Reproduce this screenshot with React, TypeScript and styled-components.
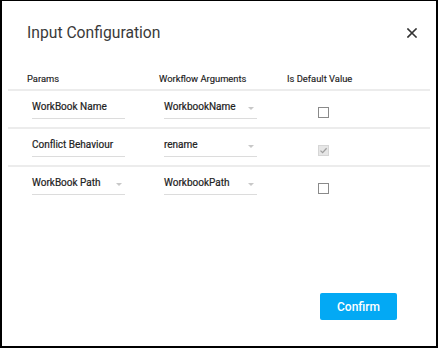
import styled, { createGlobalStyle } from "styled-components";

const GlobalStyle = createGlobalStyle`
  html, body {
    margin: 0;
    padding: 0;
    background: #ffffff;
  }
  body {
    font-family: Roboto, "Liberation Sans", sans-serif;
    color: #333333;
  }
`;

type Row = {
  param: string;
  paramSelect?: boolean;
  argument: string;
  isDefault: boolean;
};

const ROWS: Row[] = [
  { param: "WorkBook Name", argument: "WorkbookName", isDefault: false },
  { param: "Conflict Behaviour", argument: "rename", isDefault: true },
  { param: "WorkBook Path", paramSelect: true, argument: "WorkbookPath", isDefault: false },
];

export default function App() {
  return (
    <>
      <GlobalStyle />
      <Frame>
        <TitleBar>
          <Title>Input Configuration</Title>
          <CloseButton aria-label="close">
            <svg width="10" height="10" viewBox="0 0 10 10">
              <path d="M1 1 L9 9 M9 1 L1 9" stroke="#333" strokeWidth="1.6" strokeLinecap="square" />
            </svg>
          </CloseButton>
        </TitleBar>

        <Table>
          <HeaderRow>
            <HeaderCell>Params</HeaderCell>
            <HeaderCell>Workflow Arguments</HeaderCell>
            <HeaderCell>Is Default Value</HeaderCell>
          </HeaderRow>
          {ROWS.map((row) => (
            <BodyRow key={row.param}>
              <Cell>
                <Field>
                  <FieldText>{row.param}</FieldText>
                  {row.paramSelect && <Arrow />}
                </Field>
              </Cell>
              <Cell>
                <Field>
                  <FieldText>{row.argument}</FieldText>
                  <Arrow />
                </Field>
              </Cell>
              <Cell>
                <Checkbox $checked={row.isDefault}>
                  {row.isDefault && (
                    <svg width="9" height="9" viewBox="0 0 9 9">
                      <path d="M1.5 4.6 L3.6 6.6 L7.6 2.2" fill="none" stroke="#9e9e9e" strokeWidth="1.3" />
                    </svg>
                  )}
                </Checkbox>
              </Cell>
            </BodyRow>
          ))}
        </Table>

        <Footer>
          <ConfirmButton>Confirm</ConfirmButton>
        </Footer>
      </Frame>
    </>
  );
}

const Frame = styled.div`
  width: 438px;
  height: 348px;
  box-sizing: border-box;
  border: 2px solid #000;
  border-top-width: 1px;
  display: flex;
  flex-direction: column;
  background: #fff;
`;

const TitleBar = styled.div`
  display: flex;
  align-items: center;
  justify-content: space-between;
  padding: 22px 19px 0 25px;
  height: 20px;
`;

const Title = styled.h1`
  margin: 0;
  font-size: 15.7px;
  font-weight: 400;
  line-height: 20px;
  color: #3a3a3a;
`;

const CloseButton = styled.button`
  border: none;
  background: none;
  padding: 0;
  width: 10px;
  height: 10px;
  display: flex;
  cursor: pointer;
`;

const Table = styled.div`
  margin: 23px 6px 0 6px;
`;

const HeaderRow = styled.div`
  display: grid;
  grid-template-columns: 132px 128px 1fr;
  padding-left: 19px;
  height: 25px;
  padding-top: 1px;
  box-sizing: border-box;
  align-items: center;
  border-bottom: 2px solid #ececec;
`;

const HeaderCell = styled.div`
  font-size: 9.4px;
  font-weight: 400;
  color: #222;
  -webkit-text-stroke: 0.15px #222;
`;

const BodyRow = styled.div`
  display: grid;
  grid-template-columns: 132px 128px 1fr;
  padding-left: 19px;
  height: 36px;
  border-bottom: 2px solid #ececec;

  &:last-child {
    border-bottom: none;
  }
`;

const Cell = styled.div`
  padding-left: 5px;
`;

const Field = styled.div`
  width: 93px;
  box-sizing: border-box;
  margin-top: 9px;
  padding-bottom: 4px;
  border-bottom: 1px solid #dcdcdc;
  display: flex;
  align-items: center;
  justify-content: space-between;
`;

const FieldText = styled.span`
  font-size: 10px;
  font-weight: 400;
  line-height: 14px;
  color: #222;
  -webkit-text-stroke: 0.2px #222;
  white-space: nowrap;
`;

const Arrow = styled.span`
  width: 0;
  height: 0;
  margin-right: 3px;
  margin-top: 2px;
  border-left: 3px solid transparent;
  border-right: 3px solid transparent;
  border-top: 3px solid #c8c8c8;
`;

const Checkbox = styled.span<{ $checked: boolean }>`
  display: flex;
  align-items: center;
  justify-content: center;
  box-sizing: border-box;
  width: 11px;
  height: 11px;
  margin: 16px 0 0 26px;
  border: 1px solid ${(p) => (p.$checked ? "#d6d6d6" : "#8a8a8a")};
  background: ${(p) => (p.$checked ? "#e6e6e6" : "#fff")};
`;

const Footer = styled.div`
  margin-top: auto;
  display: flex;
  justify-content: flex-end;
  padding: 0 39px 26px 0;
`;

const ConfirmButton = styled.button`
  width: 77px;
  height: 27px;
  border: none;
  border-radius: 2px;
  background: #03a9f4;
  color: #fff;
  font-family: Roboto, "Liberation Sans", sans-serif;
  font-size: 12px;
  font-weight: 500;
  cursor: pointer;
`;
